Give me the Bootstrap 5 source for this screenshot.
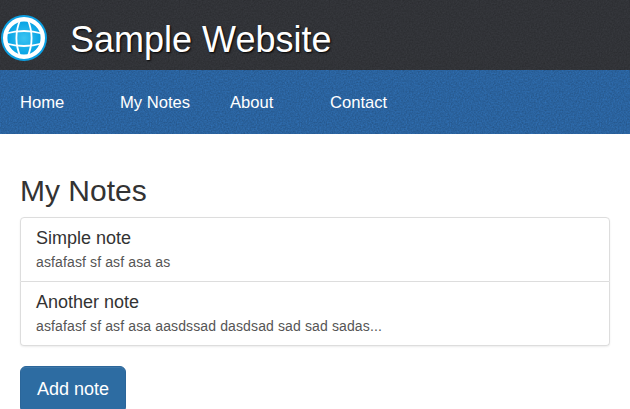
<!DOCTYPE html>
<html lang="en">
<head>
<meta charset="utf-8">
<title>Sample Website</title>
<meta name="viewport" content="width=device-width, initial-scale=1">
<link href="https://cdn.jsdelivr.net/npm/bootstrap@5.3.0/dist/css/bootstrap.min.css" rel="stylesheet">
<style>
body{font-family:"Liberation Sans",Arial,sans-serif;font-size:14px;line-height:20px;color:#333;overflow:hidden}
.grain{background-image:url("data:image/svg+xml,%3Csvg xmlns='http://www.w3.org/2000/svg' width='150' height='150'%3E%3Cfilter id='n'%3E%3CfeTurbulence type='fractalNoise' baseFrequency='.65' numOctaves='2' stitchTiles='stitch'/%3E%3CfeColorMatrix values='0 0 0 0 0  0 0 0 0 0  0 0 0 0 0  .3 0 0 0 -.03'/%3E%3C/filter%3E%3Crect width='150' height='150' filter='url(%23n)'/%3E%3C/svg%3E")}
.site-header{height:70px;background-color:#383a3f}
.site-logo{width:48px;height:48px;margin-top:8px}
.site-title{font-size:36px;line-height:40px;margin:10px 0 0 22px;text-shadow:1px 1px 2px #000}
.site-nav{height:64px;background-color:#3070b4}
.site-nav .nav-link{font-size:16.6px;line-height:24px;color:#fff;padding:2px 0 0}
.site-nav,.page-body{padding-left:20px;padding-right:20px}
.w-home{width:100px}.w-notes{width:110px}
.page-title{font-size:30px;line-height:33px;margin:40px 0 10px}
.notes{--bs-list-group-border-color:#ddd;--bs-list-group-border-radius:4px;box-shadow:0 1px 2px rgba(0,0,0,.075)}
.notes .list-group-item{padding:10px 15px;color:#555}
.notes .list-group-item:first-child{height:65px}
.notes h4{font-size:18px;line-height:20px;margin:0 0 5px;color:#333}
.notes p{line-height:18px;letter-spacing:.125px}
.btn-add{--bs-btn-bg:#2d6ca2;--bs-btn-border-color:#2b669a;--bs-btn-color:#fff;--bs-btn-font-size:18px;--bs-btn-line-height:1.4;--bs-btn-padding-x:16px;--bs-btn-padding-y:10px;--bs-btn-border-radius:6px;margin-top:20px;box-shadow:inset 0 1px 0 rgba(255,255,255,.08)}
</style>
</head>
<body>
<header class="site-header grain d-flex align-items-center">
  <svg class="site-logo" viewBox="0 0 48 48">
    <defs><radialGradient id="sea"><stop offset="0" stop-color="#3cc4f2"/><stop offset="1" stop-color="#009fe3"/></radialGradient></defs>
    <circle cx="24" cy="23" r="23" fill="#0c9fe2"/>
    <circle cx="24" cy="23" r="18.800" fill="url(#sea)" stroke="#fff" stroke-width="4.400"/>
    <g fill="none" stroke="#fff" stroke-width="1.800">
      <path d="M20.500 4Q12.300 23 20.500 42M27.500 4Q35.700 23 27.500 42"/>
      <path d="M6 18.500Q24 13.500 42 18.500M6 28.500Q24 33.500 42 28.500"/>
    </g>
  </svg>
  <h1 class="site-title text-white fw-normal">Sample Website</h1>
</header>
<nav class="site-nav grain d-flex align-items-center">
  <ul class="nav flex-nowrap">
    <li class="nav-item w-home"><a class="nav-link" href="#">Home</a></li>
    <li class="nav-item w-notes"><a class="nav-link" href="#">My Notes</a></li>
    <li class="nav-item w-home"><a class="nav-link" href="#">About</a></li>
    <li class="nav-item"><a class="nav-link" href="#">Contact</a></li>
  </ul>
</nav>
<main class="page-body">
  <h2 class="page-title fw-normal">My Notes</h2>
  <div class="notes list-group">
    <a href="#" class="list-group-item"><h4 class="fw-normal">Simple note</h4><p class="mb-0">asfafasf sf asf asa as</p></a>
    <a href="#" class="list-group-item"><h4 class="fw-normal">Another note</h4><p class="mb-0">asfafasf sf asf asa aasdssad dasdsad sad sad sadas...</p></a>
  </div>
  <button type="button" class="btn btn-add">Add note</button>
</main>
<script src="https://cdn.jsdelivr.net/npm/bootstrap@5.3.0/dist/js/bootstrap.bundle.min.js"></script>
</body>
</html>
